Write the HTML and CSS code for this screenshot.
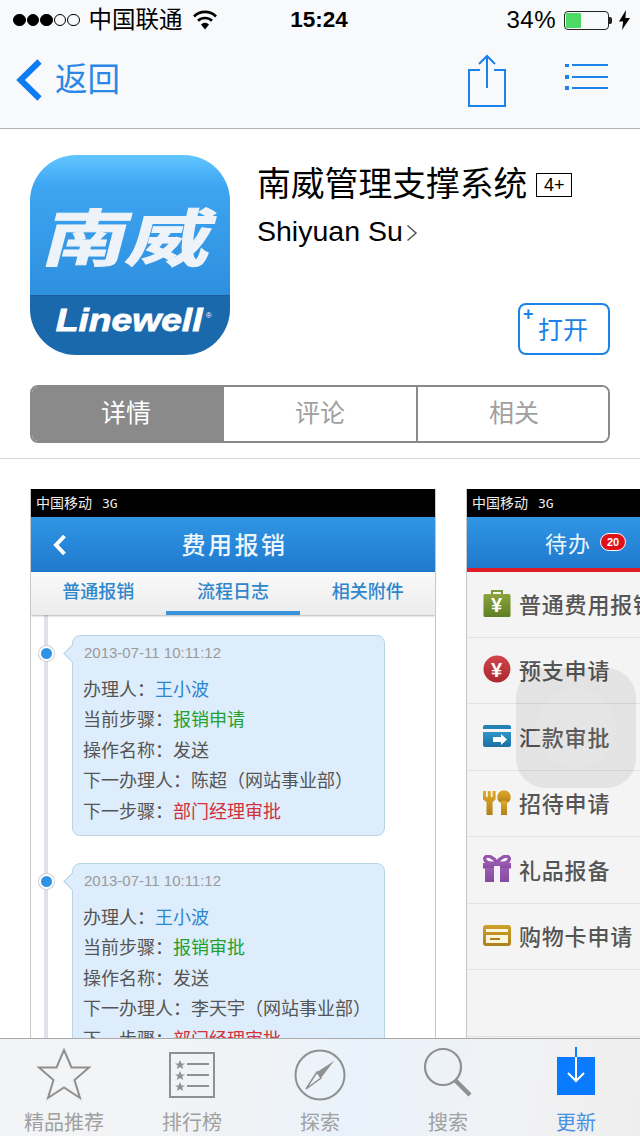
FILE: index.html
```html
<!DOCTYPE html>
<html lang="zh-CN">
<head>
<meta charset="utf-8">
<title>南威管理支撑系统</title>
<link rel="stylesheet" href="styles.css">
</head>
<body>
<div class="phone">
  <header class="topbar">
    <div class="status">
      <div class="status-left">
        <span class="signal"><i class="on"></i><i class="on"></i><i class="on"></i><i></i><i></i></span>
        <span class="carrier">中国联通</span>
        <svg class="wifi" width="24" height="20" viewBox="0 0 24 20"><path d="M1 6.500a15.500 15.500 0 0 1 22 0" fill="none" stroke="#000" stroke-width="2.600"/><path d="M5 10.800a10 10 0 0 1 14 0" fill="none" stroke="#000" stroke-width="2.600"/><path d="M8 14.500a5.600 5.600 0 0 1 8 0L12 19.500z" fill="#000"/></svg>
      </div>
      <div class="time">15:24</div>
      <div class="status-right">
        <span class="pct">34%</span>
        <span class="battery"><span class="charge"></span></span>
        <span class="battery-tip"></span>
        <svg class="bolt" width="11" height="20" viewBox="0 0 11 20"><path d="M7 0 0 11.500h4.200L3 20l8-12H6.400z" fill="#000"/></svg>
      </div>
    </div>
    <nav class="nav">
      <svg class="back-icon" width="27" height="42" viewBox="0 0 27 42"><path d="M23.500 2.500 4.500 21l19 18.500" fill="none" stroke="#0d7cf2" stroke-width="6"/></svg>
      <span class="back-text">返回</span>
      <div class="nav-actions">
        <svg class="share-icon" width="38" height="54" viewBox="0 0 38 54"><path d="M12 16H1v36h36V16H26" fill="none" stroke="#1a82e8" stroke-width="2"/><path d="M19 2v32M11 10l8-8 8 8" fill="none" stroke="#1a82e8" stroke-width="2"/></svg>
        <svg class="list-icon" width="44" height="26" viewBox="0 0 44 26"><g fill="#1a82e8"><rect x="0" y="0" width="4" height="3"/><rect x="0" y="11" width="4" height="4"/><rect x="0" y="22" width="4" height="4"/><rect x="7" y="0" width="36" height="2"/><rect x="7" y="12" width="36" height="2"/><rect x="7" y="23" width="36" height="2"/></g></svg>
      </div>
    </nav>
  </header>

  <main class="content">
    <section class="app-head">
      <div class="app-icon">
        <div class="icon-top"><span class="logo-cn">南威</span></div>
        <div class="icon-bottom"><span class="logo-en">Linewell</span><span class="logo-r">®</span></div>
      </div>
      <div class="app-info">
        <h1 class="app-title">南威管理支撑系统<span class="age">4+</span></h1>
        <div class="app-author">Shiyuan Su<svg class="author-arrow" width="12" height="20" viewBox="0 0 12 20"><path d="M1.500 2.500 10 10l-8.500 7.500" fill="none" stroke="#555" stroke-width="1.500"/></svg></div>
        <div class="open-row">
          <button class="open-btn"><span class="plus">+</span>打开</button>
        </div>
      </div>
    </section>

    <div class="segments">
      <div class="segment active">详情</div>
      <div class="segment">评论</div>
      <div class="segment">相关</div>
    </div>

    <section class="gallery">
      <article class="shot">
        <div class="shot-status">中国移动<span class="net">3G</span></div>
        <div class="shot-bar">
          <svg class="shot-back" width="14" height="22" viewBox="0 0 14 22"><path d="M11.500 2 3 11l8.500 9" fill="none" stroke="#fff" stroke-width="4"/></svg>
          <span class="shot-title">费用报销</span>
        </div>
        <div class="shot-tabs">
          <div class="shot-tab">普通报销</div>
          <div class="shot-tab current">流程日志</div>
          <div class="shot-tab">相关附件</div>
        </div>
        <div class="log">
          <div class="entry">
            <span class="entry-dot"></span>
            <div class="entry-time">2013-07-11 10:11:12</div>
            <div class="entry-line">办理人：<span class="c-blue">王小波</span></div>
            <div class="entry-line">当前步骤：<span class="c-green">报销申请</span></div>
            <div class="entry-line">操作名称：发送</div>
            <div class="entry-line">下一办理人：陈超（网站事业部）</div>
            <div class="entry-line">下一步骤：<span class="c-red">部门经理审批</span></div>
          </div>
          <div class="entry">
            <span class="entry-dot"></span>
            <div class="entry-time">2013-07-11 10:11:12</div>
            <div class="entry-line">办理人：<span class="c-blue">王小波</span></div>
            <div class="entry-line">当前步骤：<span class="c-green">报销审批</span></div>
            <div class="entry-line">操作名称：发送</div>
            <div class="entry-line">下一办理人：李天宇（网站事业部）</div>
            <div class="entry-line">下一步骤：<span class="c-red">部门经理审批</span></div>
          </div>
        </div>
      </article>

      <article class="shot shot-todo">
        <div class="shot-status">中国移动<span class="net">3G</span></div>
        <div class="shot-bar todo-bar">
          <span class="todo-title">待办</span><span class="todo-badge">20</span>
        </div>
        <div class="todo-list">
          <div class="todo-row">
            <svg class="todo-icon" width="28" height="28" viewBox="0 0 28 28"><defs><linearGradient id="gGreen" x1="0" y1="0" x2="0" y2="1"><stop offset="0" stop-color="#8ba33c"/><stop offset="1" stop-color="#5f7f24"/></linearGradient></defs><path d="M9 5V2h10v3" fill="none" stroke="#7d9a3a" stroke-width="2"/><rect x="0.500" y="5" width="27" height="23" rx="1.500" fill="url(#gGreen)"/><text x="14" y="23" class="icon-yen" fill="#fff">¥</text></svg>
            <span>普通费用报销</span>
          </div>
          <div class="todo-row">
            <svg class="todo-icon" width="28" height="28" viewBox="0 0 28 28"><defs><linearGradient id="gRed" x1="0" y1="0" x2="0" y2="1"><stop offset="0" stop-color="#d2444a"/><stop offset="1" stop-color="#a82a30"/></linearGradient></defs><circle cx="14" cy="14" r="13.500" fill="url(#gRed)"/><text x="14" y="22" class="icon-yen" fill="#fff">¥</text></svg>
            <span>预支申请</span>
          </div>
          <div class="todo-row">
            <svg class="todo-icon" width="28" height="22" viewBox="0 0 28 22"><defs><linearGradient id="gBlue" x1="0" y1="0" x2="0" y2="1"><stop offset="0" stop-color="#3196c8"/><stop offset="1" stop-color="#1d6fa2"/></linearGradient></defs><path d="M2 0h24a2 2 0 0 1 2 2v2H0V2a2 2 0 0 1 2-2z" fill="#2381b5"/><path d="M0 7h28v13a2 2 0 0 1-2 2H2a2 2 0 0 1-2-2z" fill="url(#gBlue)"/><path d="M10 12h8V9l6 5.500-6 5.500v-3h-8z" fill="#fff"/></svg>
            <span>汇款审批</span>
          </div>
          <div class="todo-row">
            <svg class="todo-icon" width="28" height="25" viewBox="0 0 28 25"><defs><linearGradient id="gGold" x1="0" y1="0" x2="0" y2="1"><stop offset="0" stop-color="#e0aa26"/><stop offset="1" stop-color="#b0801c"/></linearGradient></defs><path d="M0 1h3v6h1.800V1h3v6h1.800V1h3v8.500l-3 2.500v13H3.500V12L0 9.500z" fill="url(#gGold)"/><circle cx="21" cy="7" r="6.800" fill="url(#gGold)"/><rect x="18" y="11" width="6" height="14" fill="url(#gGold)"/></svg>
            <span>招待申请</span>
          </div>
          <div class="todo-row">
            <svg class="todo-icon" width="28" height="27" viewBox="0 0 28 27"><defs><linearGradient id="gPurple" x1="0" y1="0" x2="0" y2="1"><stop offset="0" stop-color="#9a5cb4"/><stop offset="1" stop-color="#824b9c"/></linearGradient></defs><path d="M14 7.500C10 1.500 4.500 0 2.500 2s0 6 5 6h13c5 0 7-4 5-6S18 1.500 14 7.500z" fill="none" stroke="#9456ae" stroke-width="3.200"/><rect x="0" y="8" width="28" height="5.500" fill="url(#gPurple)"/><rect x="2" y="13" width="24" height="14" fill="url(#gPurple)"/><rect x="11" y="11" width="6" height="16" fill="#f4f0f6"/></svg>
            <span>礼品报备</span>
          </div>
          <div class="todo-row">
            <svg class="todo-icon" width="28" height="21" viewBox="0 0 28 21"><defs><linearGradient id="gWallet" x1="0" y1="0" x2="0" y2="1"><stop offset="0" stop-color="#cfa02a"/><stop offset="1" stop-color="#ab8120"/></linearGradient></defs><rect width="28" height="21" rx="3" fill="url(#gWallet)"/><rect x="3" y="4" width="22" height="3" fill="#fbf6dc"/><rect x="3" y="10" width="22" height="8" fill="#fbf6dc"/><rect x="7" y="13" width="10" height="2" fill="#ab8120"/></svg>
            <span>购物卡申请</span>
          </div>
          <div class="todo-row"></div>
        </div>
      </article>
    </section>
  </main>

  <footer class="tabbar">
    <div class="tab">
      <svg width="56" height="54" viewBox="0 0 56 54"><path d="M28 3l7.500 17.500H53L38.500 33l5.500 18-16-10.500L12 51l5.500-18L3 20.500h17.500z" fill="none" stroke="#909090" stroke-width="2"/></svg>
      <span>精品推荐</span>
    </div>
    <div class="tab">
      <svg width="46" height="54" viewBox="0 0 46 54"><rect x="1" y="6" width="44" height="44" fill="none" stroke="#909090" stroke-width="2"/><g fill="#909090"><path d="M11 13l1.500 3.500H16l-2.800 2 1 3.500-3.200-2-3.200 2 1-3.500-2.800-2h3.500z"/><path d="M11 24l1.500 3.500H16l-2.800 2 1 3.500-3.200-2-3.200 2 1-3.500-2.800-2h3.500z"/><path d="M11 35l1.500 3.500H16l-2.800 2 1 3.500-3.200-2-3.200 2 1-3.500-2.800-2h3.500z"/><rect x="18" y="16" width="22" height="2"/><rect x="18" y="27" width="22" height="2"/><rect x="18" y="38" width="22" height="2"/></g></svg>
      <span>排行榜</span>
    </div>
    <div class="tab">
      <svg width="52" height="54" viewBox="0 0 52 54"><circle cx="26" cy="28" r="24.500" fill="none" stroke="#909090" stroke-width="2"/><path d="M40 14 23 25l4 6z" fill="#909090"/><path d="M23 25 12 42l15-11z" fill="none" stroke="#909090" stroke-width="1.500"/></svg>
      <span>探索</span>
    </div>
    <div class="tab">
      <svg width="52" height="54" viewBox="0 0 52 54"><circle cx="21" cy="20" r="18" fill="none" stroke="#909090" stroke-width="2.200"/><path d="M33 33l15 15" stroke="#909090" stroke-width="4.500"/></svg>
      <span>搜索</span>
    </div>
    <div class="tab tab-on">
      <svg width="38" height="54" viewBox="0 0 38 54"><rect y="10" width="38" height="38" fill="#0a7bff"/><rect x="18" y="0" width="2" height="10" fill="#0a7bff"/><path d="M19 10v24M11 26l8 8 8-8" fill="none" stroke="#fff" stroke-width="2"/></svg>
      <span>更新</span>
    </div>
  </footer>

  <div class="assistive"><span class="assistive-ring"></span></div>
</div>
</body>
</html>
```

FILE: styles.css
```css
* { box-sizing: border-box; }
html, body { margin: 0; padding: 0; }
body {
  background: #fff;
  font-family: "Liberation Sans", "Noto Sans CJK SC", sans-serif;
  color: #000;
}
.phone {
  position: relative;
  width: 640px;
  height: 1136px;
  overflow: hidden;
  display: flex;
  flex-direction: column;
}

/* top bar */
.topbar {
  flex: none;
  height: 129px;
  background: #f8f9fb;
  border-bottom: 1px solid #b4b4b6;
}
.status {
  height: 40px;
  display: grid;
  grid-template-columns: 1fr auto 1fr;
  align-items: center;
  padding: 0 10px 0 13px;
}
.status-left, .status-right { display: flex; align-items: center; }
.status-right { justify-content: flex-end; }
.signal { display: flex; gap: 1px; }
.signal i {
  width: 12.500px;
  height: 12.500px;
  border: 1px solid #000;
  border-radius: 50%;
}
.signal i.on { background: #000; }
.carrier { margin-left: 9px; font-size: 23.500px; line-height: 40px; }
.wifi { margin-left: 10px; }
.time { font-size: 22.500px; font-weight: 700; margin-right: 5px; }
.pct { font-size: 24px; letter-spacing: .5px; }
.battery {
  margin-left: 8px;
  width: 45px;
  height: 19px;
  border: 1px solid #222;
  border-radius: 4px;
  padding: 1px;
  display: flex;
}
.charge { width: 15px; background: #4cd964; border-radius: 1px; }
.battery-tip { width: 3px; height: 7px; background: #222; border-radius: 0 2px 2px 0; }
.bolt { margin-left: 7px; }

.nav {
  height: 88px;
  display: flex;
  align-items: center;
  padding: 0 31px 0 16px;
}
.back-icon { margin-top: -8px; }
.back-text { margin-left: 12px; font-size: 32.500px; line-height: 1; color: #2a87e6; margin-top: -8px; }
.nav-actions { margin-left: auto; display: flex; align-items: flex-start; gap: 59px; }
.share-icon { margin-top: -7px; }
.list-icon { margin-top: 3px; }

/* content */
.content {
  flex: 1;
  min-height: 0;
  overflow: hidden;
  background: #fff;
  display: flex;
  flex-direction: column;
}
.app-head {
  flex: none;
  display: flex;
  gap: 26px;
  padding: 26px 30px 0;
}
.app-icon {
  flex: none;
  width: 200px;
  height: 200px;
  border-radius: 46px;
  overflow: hidden;
  display: flex;
  flex-direction: column;
}
.icon-top {
  height: 140px;
  background: linear-gradient(#62c6ff 0, #3da5f2 22%, #2e8fdf 100%);
  display: flex;
  justify-content: center;
  padding-top: 26px;
  padding-left: 3px;
}
.logo-cn {
  font-family: "Noto Sans CJK SC", sans-serif;
  font-weight: 700;
  font-size: 84px;
  line-height: 106px;
  height: 106px;
  color: #eef3f9;
  -webkit-text-stroke: 1.500px #eef3f9;
  transform: scaleY(.74) skewX(-11deg);
  transform-origin: center center;
  white-space: nowrap;
}
.icon-bottom {
  height: 60px;
  background: #1b69ad;
  border-top: 1px solid #1a5f9c;
  display: flex;
  justify-content: center;
  align-items: center;
  color: #fff;
  padding-left: 20px;
}
.logo-en {
  font-size: 31px;
  font-weight: 700;
  font-style: italic;
  line-height: 1;
  -webkit-text-stroke: .8px #fff;
  transform: scaleX(1.2);
  margin-top: -10px;
}
.logo-r { font-size: 8px; margin: -20px 0 0 15px; }

.app-info { flex: 1; display: flex; flex-direction: column; min-width: 0; padding-left: 1px; }
.app-title {
  margin: 3px 0 0;
  font-size: 33.800px;
  font-weight: 400;
  line-height: 52px;
  display: flex;
  align-items: center;
  white-space: nowrap;
}
.age {
  margin: 2px 0 0 9px;
  width: 36px;
  height: 24px;
  border: 1px solid #000;
  font-size: 18px;
  line-height: 22px;
  text-align: center;
}
.app-author {
  font-size: 28.500px;
  line-height: 36px;
  margin-top: 3px;
  display: flex;
  align-items: center;
}
.author-arrow { margin-left: 3px; margin-top: 3px; }
.open-row { margin-top: auto; display: flex; justify-content: flex-end; }
.open-btn {
  position: relative;
  width: 92px;
  height: 52px;
  border: 2px solid #1a82e8;
  border-radius: 8px;
  background: #fff;
  color: #1a82e8;
  font-family: inherit;
  font-size: 25px;
  line-height: 1;
  padding: 2px 2px 0 0;
  text-align: center;
}
.plus {
  position: absolute;
  left: 3px;
  top: -3px;
  font-size: 18px;
  font-weight: 700;
  line-height: 24px;
}

.segments {
  flex: none;
  margin: 30px 30px 15px;
  height: 58px;
  display: flex;
  border: 2px solid #8a8a8a;
  border-radius: 8px;
  overflow: hidden;
}
.segment {
  flex: 1;
  text-align: center;
  font-size: 25px;
  line-height: 52px;
  color: #a0a0a0;
  background: #fff;
  border-left: 2px solid #8a8a8a;
}
.segment:first-child { border-left: 0; flex: none; width: 190px; padding-right: 2px; }
.segment:last-child { flex: none; width: 192px; padding-left: 2px; }
.segment.active { background: #8a8a8a; color: #fff; }

.gallery {
  flex: 1;
  min-height: 0;
  display: flex;
  gap: 30px;
  padding: 30px 0 0 30px;
  border-top: 1px solid #d4d4d4;
  overflow: hidden;
}
.shot {
  flex: none;
  width: 406px;
  border-left: 1px solid #c8c8c8;
  border-right: 1px solid #c8c8c8;
  display: flex;
  flex-direction: column;
  min-height: 100%;
  overflow: hidden;
}
.shot-status {
  flex: none;
  height: 28px;
  margin: 0 -1px;
  background: #000;
  color: #eee;
  font-size: 14px;
  line-height: 29px;
  padding-left: 6px;
}
.net { margin-left: 10px; font-family: "DejaVu Sans Mono", monospace; font-size: 13px; }
.shot-bar {
  flex: none;
  height: 55px;
  margin: 0 -1px;
  padding: 0 0 3px 3px;
  background: linear-gradient(#2f96e4, #2079cd);
  display: flex;
  align-items: center;
  justify-content: center;
  position: relative;
}
.shot-back { position: absolute; left: 23px; top: 17px; }
.shot-title { color: #eef6fd; font-size: 24px; font-weight: 500; letter-spacing: 2.500px; }
.shot-tabs {
  flex: none;
  height: 43px;
  display: flex;
  position: relative;
  z-index: 1;
  background: linear-gradient(#fafafa, #ececec);
  box-shadow: 0 1px 2px rgba(0, 0, 0, .3);
}
.shot-tab {
  flex: 1;
  text-align: center;
  color: #2e86cc;
  font-size: 18px;
  font-weight: 500;
  line-height: 40px;
}
.shot-tab.current { border-bottom: 4px solid #3a94dc; height: 43px; }

.log {
  flex: 1;
  position: relative;
  padding: 20px 50px 0 41px;
  background: #fff;
}
.log::before {
  content: "";
  position: absolute;
  left: 13px;
  top: 0;
  bottom: 0;
  width: 4px;
  background: #e4dfe9;
}
.entry {
  position: relative;
  height: 201px;
  margin-bottom: 27px;
  padding: 6px 10px 0 11px;
  background: #deedfb;
  border: 1px solid #b8d4e8;
  border-radius: 8px;
  color: #555;
}
.entry::before {
  content: "";
  position: absolute;
  left: -7px;
  top: 11px;
  width: 12px;
  height: 12px;
  background: #deedfb;
  border-left: 1px solid #b8d4e8;
  border-bottom: 1px solid #b8d4e8;
  transform: rotate(45deg);
}
.entry-dot {
  position: absolute;
  left: -34px;
  top: 10px;
  width: 15px;
  height: 15px;
  border-radius: 50%;
  background: #2d93e2;
  border: 2px solid #fff;
  box-shadow: 0 0 0 1px #cfcfd6;
}
.entry-time { font-size: 15px; line-height: 22px; color: #9a9a9a; margin-bottom: 11px; }
.entry-line { font-size: 18px; line-height: 30.400px; white-space: nowrap; position: relative; margin-left: -1px; }
.c-blue { color: #2c86d0; }
.c-green { color: #22a030; }
.c-red { color: #d2303a; }

.shot-todo { border-right: 0; background: #f4f4f4; }
.todo-bar {
  height: 55px;
  border-bottom: 4px solid #e01c26;
  background: linear-gradient(#2f96e4, #2079cd);
  padding: 0 0 2px 79px;
  justify-content: flex-start;
}
.todo-title { color: #eef6fd; font-size: 22px; letter-spacing: 1px; }
.todo-badge {
  margin-left: 9px;
  width: 26px;
  height: 18px;
  border-radius: 9px;
  background: #e01018;
  border: 1px solid #fff;
  color: #fff;
  font-size: 11px;
  font-weight: 700;
  line-height: 16px;
  text-align: center;
}
.todo-list { flex: 1; display: flex; flex-direction: column; margin-top: -1px; }
.todo-row {
  flex: none;
  height: 66.500px;
  padding: 0 0 2px 16px;
  display: flex;
  align-items: center;
  gap: 8px;
  color: #555;
  font-size: 22px;
  letter-spacing: .8px;
  font-weight: 500;
  white-space: nowrap;
  border-bottom: 1px solid #e2e2e2;
}
.icon-yen { font-size: 20px; font-weight: 700; text-anchor: middle; font-family: "Liberation Sans", sans-serif; }

/* tab bar */
.tabbar {
  flex: none;
  height: 98px;
  display: grid;
  grid-template-columns: repeat(5, 128px);
  background: linear-gradient(100deg, #f3f4f5 0, #f0f3f6 40%, #e9f2fb 55%, #f1f2f4 80%, #efeeee 100%);
  border-top: 1px solid #a8a8a8;
}
.tab {
  display: flex;
  flex-direction: column;
  align-items: center;
  padding-top: 8px;
  color: #a0a0a0;
  font-size: 20px;
  line-height: 30px;
}
.tab svg { height: 54px; flex: none; margin-bottom: 7px; }
.tab-on { color: #4a90e2; }

.assistive {
  position: absolute;
  left: 516px;
  top: 668px;
  width: 120px;
  height: 120px;
  border-radius: 30px;
  background: rgba(0, 0, 0, .065);
  display: flex;
  align-items: center;
  justify-content: center;
}
.assistive-ring {
  width: 80px;
  height: 80px;
  border-radius: 50%;
  background: rgba(255, 255, 255, .08);
}
```
